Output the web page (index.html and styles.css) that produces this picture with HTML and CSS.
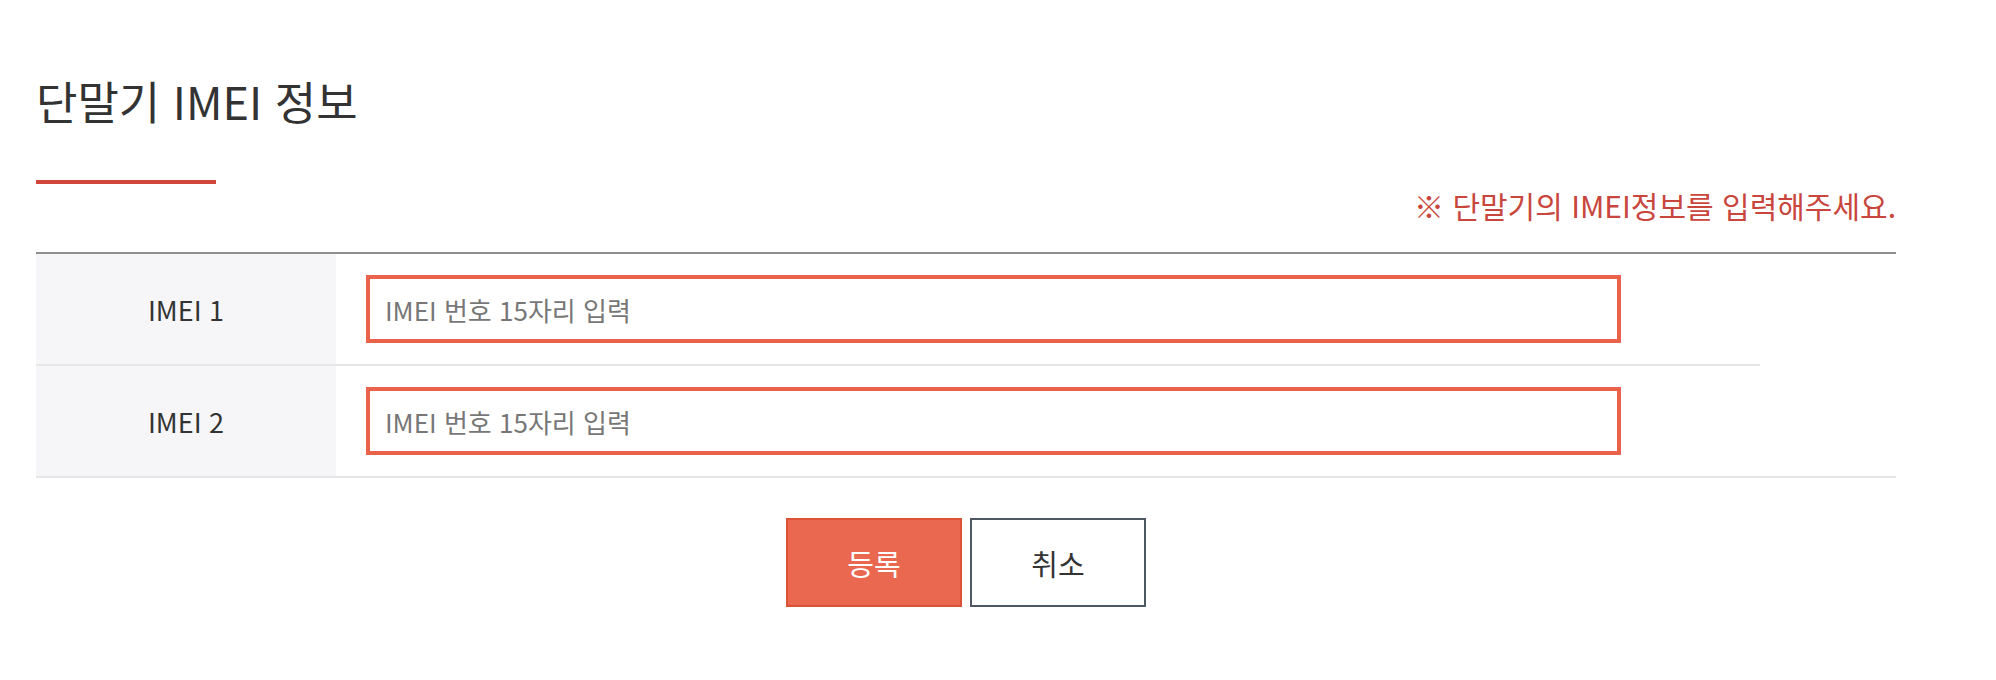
FILE: index.html
```html
<!DOCTYPE html>
<html lang="ko">
<head>
<meta charset="utf-8">
<title>단말기 IMEI 정보</title>
<link rel="stylesheet" href="styles.css">
</head>
<body>
<div class="page">
  <h1 class="title">단말기 IMEI 정보</h1>
  <div class="title-bar"></div>
  <p class="notice">※ 단말기의 IMEI정보를 입력해주세요.</p>
  <div class="form-table">
    <div class="row row-short">
      <div class="label">IMEI 1</div>
      <div class="value"><input class="field" type="text" placeholder="IMEI 번호 15자리 입력"></div>
    </div>
    <div class="row">
      <div class="label">IMEI 2</div>
      <div class="value"><input class="field" type="text" placeholder="IMEI 번호 15자리 입력"></div>
    </div>
  </div>
  <div class="actions">
    <button class="btn btn-primary" type="button">등록</button>
    <button class="btn btn-cancel" type="button">취소</button>
  </div>
</div>
</body>
</html>
```
FILE: styles.css
```css
* { box-sizing: border-box; }
html, body { margin: 0; padding: 0; background: #fff; }
body {
  font-family: "Noto Sans CJK KR", "Noto Sans", sans-serif;
  color: #333;
}
.page {
  width: 1860px;
  margin-left: 36px;
  padding-top: 70px;
}
.title {
  margin: 0;
  font-size: 45px;
  font-weight: 400;
  line-height: 62px;
  color: #333;
}
.title-bar {
  width: 180px;
  height: 4px;
  margin-top: 48px;
  background: #d0463a;
}
.notice {
  margin: 2px 0 28px;
  text-align: right;
  font-size: 30px;
  line-height: 38px;
  color: #c9463d;
}
.form-table {
  border-top: 2px solid #8f8f8f;
}
.row {
  display: flex;
  height: 112px;
  border-bottom: 2px solid #e6e6e6;
}
.row-short {
  margin-right: 136px;
}
.label {
  width: 300px;
  flex: none;
  display: flex;
  align-items: center;
  justify-content: center;
  background: #f6f6f8;
  font-size: 27px;
  color: #333;
}
.value {
  flex: 1;
  display: flex;
  align-items: center;
  padding-left: 30px;
}
.field {
  width: 1255px;
  height: 68px;
  border: 4px solid #ea624a;
  padding: 0 15px;
  font-family: inherit;
  font-size: 26px;
  color: #333;
  background: #fff;
  outline: none;
}
.field::placeholder { color: #777; }
.actions {
  display: flex;
  justify-content: center;
  gap: 8px;
  margin-top: 40px;
}
.btn {
  width: 176px;
  height: 89px;
  font-family: inherit;
  font-size: 29px;
  cursor: pointer;
}
.btn-primary {
  background: #ea6850;
  border: 2px solid #dc5236;
  color: #fff;
}
.btn-cancel {
  background: #fff;
  border: 2px solid #4d5863;
  color: #333;
}
```
